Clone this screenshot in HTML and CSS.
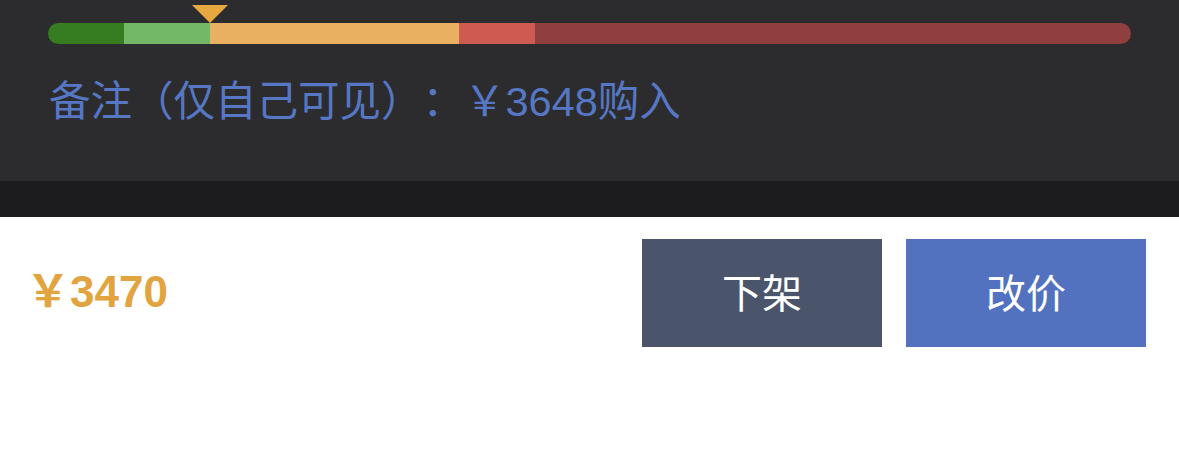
FILE: index.html
```html
<!DOCTYPE html>
<html lang="zh-CN">
<head>
<meta charset="utf-8">
<title>我的出售</title>
<link rel="stylesheet" href="styles.css">
</head>
<body>
  <section class="panel">
    <div class="range">
      <span class="marker" style="left: 162px"></span>
      <div class="range-bar">
        <span class="seg seg-1" style="width: 76px"></span>
        <span class="seg seg-2" style="width: 86px"></span>
        <span class="seg seg-3" style="width: 249px"></span>
        <span class="seg seg-4" style="width: 76px"></span>
        <span class="seg seg-5"></span>
      </div>
    </div>
    <p class="note">备注（仅自己可见）：￥3648购入</p>
  </section>
  <div class="divider"></div>
  <footer class="action-bar">
    <div class="price">￥3470</div>
    <div class="actions">
      <button class="btn btn-off">下架</button>
      <button class="btn btn-edit">改价</button>
    </div>
  </footer>
</body>
</html>
```
FILE: styles.css
```css
* {
  box-sizing: border-box;
}

html, body {
  margin: 0;
  padding: 0;
  background: #ffffff;
  font-family: "Liberation Sans", "Noto Sans CJK SC", sans-serif;
  text-spacing-trim: space-all;
}

.panel {
  background: #2c2c2e;
  height: 181px;
  padding: 23px 48px 0 48px;
}

.range {
  position: relative;
}

.range-bar {
  display: flex;
  height: 21px;
  border-radius: 10.5px;
  overflow: hidden;
}

.seg {
  display: block;
  height: 100%;
  flex: none;
}

.seg-1 { background: #367d22; }
.seg-2 { background: #72b866; }
.seg-3 { background: #e8b060; }
.seg-4 { background: #cd5b52; }
.seg-5 { background: #8f3f3d; flex: 1; }

.marker {
  position: absolute;
  top: -18px;
  width: 0;
  height: 0;
  margin-left: -18px;
  border-left: 18px solid transparent;
  border-right: 18px solid transparent;
  border-top: 18px solid #e6a83f;
}

.note {
  margin: 30px 0 0 1px;
  font-size: 41.5px;
  line-height: 56px;
  color: #5677c4;
  white-space: nowrap;
}

.divider {
  height: 36px;
  background: #1c1c1e;
}

.action-bar {
  display: flex;
  align-items: center;
  justify-content: space-between;
  padding: 22px 33px 0 26px;
}

.price {
  font-size: 44px;
  font-weight: 700;
  color: #e1a43f;
  line-height: 106px;
  height: 108px;
}

.actions {
  display: flex;
  gap: 24px;
}

.btn {
  width: 240px;
  height: 108px;
  border: none;
  border-radius: 0;
  padding: 0 0 4px 0;
  color: #ffffff;
  font-family: "Noto Sans CJK SC", sans-serif;
  font-size: 40px;
  cursor: pointer;
}

.btn-off { background: #4a546b; }
.btn-edit { background: #5272c0; }
```
